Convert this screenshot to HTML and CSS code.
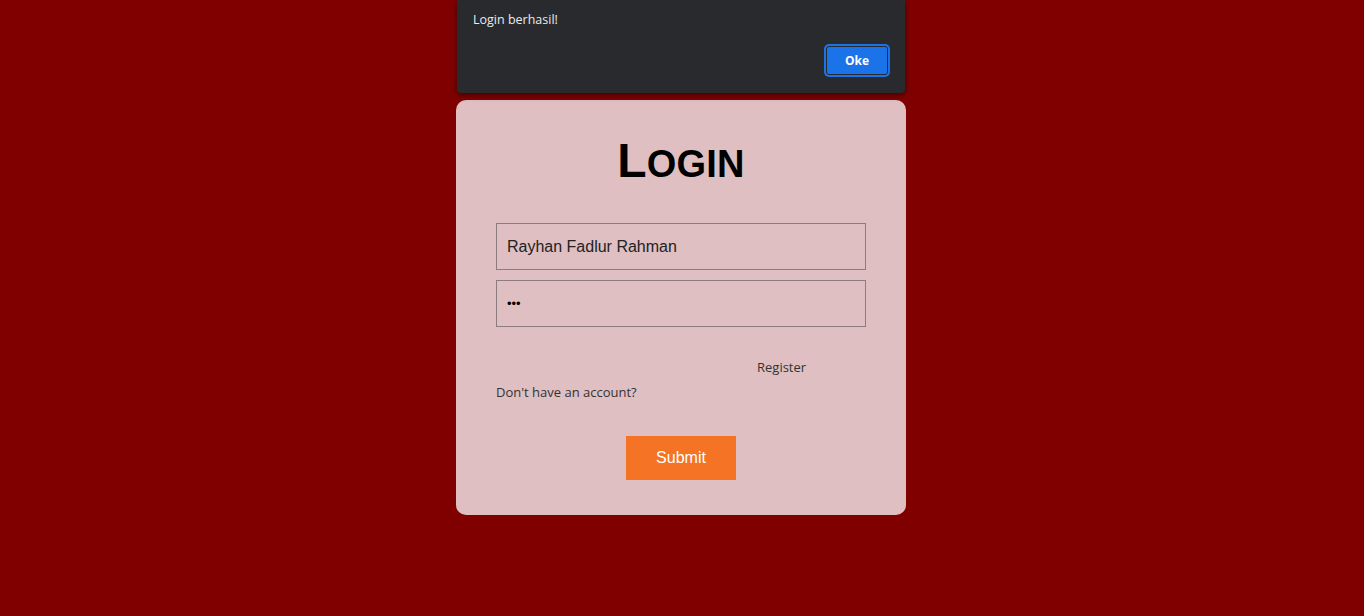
FILE: index.html
```html
<!DOCTYPE html>
<html>
<head>
<meta charset="utf-8">
<link rel="stylesheet" href="styles.css">
</head>
<body>
<div class="dialog">
  <div class="dialog-msg">Login berhasil!</div>
  <div class="dialog-actions"><button class="dialog-btn">Oke</button></div>
</div>
<main class="page">
  <form class="card">
    <h1 class="title">Login</h1>
    <div class="fields">
      <input class="field" type="text" value="Rayhan Fadlur Rahman">
      <input class="field field-pass" type="password" value="abc">
    </div>
    <div class="links">
      <div class="register-row"><a class="register">Register</a></div>
      <div class="ask">Don't have an account?</div>
    </div>
    <div class="actions"><button type="button" class="submit">Submit</button></div>
  </form>
</main>
</body>
</html>
```
FILE: styles.css
```css
html, body {
  margin: 0;
  padding: 0;
}
body {
  background: #800000;
  font-family: "Liberation Sans", Arial, sans-serif;
  width: 1364px;
  height: 616px;
  overflow: hidden;
}
.page {
  display: flex;
  justify-content: center;
  padding-top: 100px;
  padding-right: 2px;
}
.card {
  width: 450px;
  box-sizing: border-box;
  background: #dfbfc1;
  border-radius: 10px;
  padding: 33px 40px 35px;
  display: flex;
  flex-direction: column;
}
.title {
  margin: 0;
  height: 56px;
  text-align: center;
  font-size: 38px;
  line-height: 56px;
  font-weight: bold;
  text-transform: uppercase;
  letter-spacing: 0.2px;
  color: #000;
}
.title::first-letter {
  font-size: 48px;
}
.fields {
  margin-top: 34px;
  display: flex;
  flex-direction: column;
  gap: 10px;
}
.field {
  box-sizing: border-box;
  height: 47px;
  width: 370px;
  margin: 0;
  border: 1px solid #8c7c7d;
  background: transparent;
  padding: 0 10px;
  font-family: "Liberation Sans", Arial, sans-serif;
  font-size: 16px;
  color: #222;
  outline: none;
}
.field-pass {
  font-size: 13px;
  color: #000;
}
.links {
  margin-top: 28px;
  font-family: "Open Sans", "Noto Sans", sans-serif;
  font-size: 13px;
  line-height: 25px;
  color: #333;
}
.register-row {
  display: flex;
  padding-left: 261px;
}
.register {
  color: #333;
}
.actions {
  margin-top: 31px;
  display: flex;
  justify-content: center;
}
.submit {
  width: 110px;
  height: 44px;
  border: none;
  background: #f47324;
  color: #fff;
  font-family: "Liberation Sans", Arial, sans-serif;
  font-size: 16px;
  padding: 0;
}
.dialog {
  position: absolute;
  left: 457px;
  top: 0;
  width: 448px;
  height: 93px;
  box-sizing: border-box;
  background: #292a2d;
  border-radius: 0 0 4px 4px;
  box-shadow: 0 2px 6px rgba(0, 0, 0, 0.5);
  padding: 11px 16px 16px;
  font-family: "Open Sans", "Noto Sans", sans-serif;
  color: #e8eaed;
}
.dialog-msg {
  font-size: 12.5px;
  line-height: 17px;
}
.dialog-actions {
  display: flex;
  justify-content: flex-end;
  margin-top: 18px;
}
.dialog-btn {
  box-sizing: border-box;
  width: 62px;
  height: 29px;
  margin-right: 1px;
  background: #1a73e8;
  border: 1px solid #292a2d;
  box-shadow: 0 0 0 2px #1a73e8;
  border-radius: 3px;
  color: #fff;
  font-family: "Open Sans", "Noto Sans", sans-serif;
  font-weight: bold;
  font-size: 12px;
  padding: 0;
}
```
